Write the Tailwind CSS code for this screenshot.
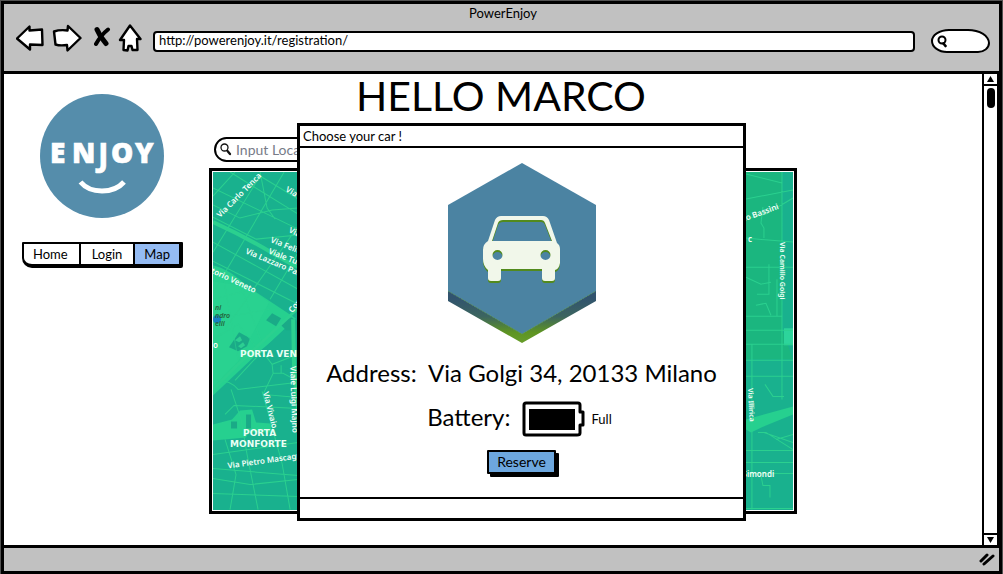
<!DOCTYPE html>
<html lang="en">
<head>
<meta charset="utf-8">
<meta name="viewport" content="width=device-width, initial-scale=1">
<title>PowerEnjoy</title>
<script src="https://cdn.jsdelivr.net/npm/@tailwindcss/browser@4"></script>
</head>
<body class="bg-white p-px font-['Lato',sans-serif] text-[13px] leading-4 text-black">
<div class="flex min-h-[calc(100vh-2px)] flex-col border-3 border-black bg-white outline outline-neutral-600">

  <!-- Browser bar -->
  <header class="border-b-3 border-black bg-[#c1c1c1] pt-px pr-[9px] pb-[18px] pl-3">
    <p class="text-center">PowerEnjoy</p>
    <div class="flex items-center pt-0.5">
      <button type="button" aria-label="Back" class="mr-2"><svg class="block" width="28" height="30" viewBox="16 22 28 30" fill="#fff" stroke="#000" stroke-width="2.4" stroke-linejoin="round"><path d="M17 37.500L29.500 25.500V29.500L42 28.500L42.500 44L30 43.500V48.500Z"/></svg></button>
      <button type="button" aria-label="Forward" class="mr-3"><svg class="block" width="30" height="30" viewBox="52 22 30 30" fill="#fff" stroke="#000" stroke-width="2.400" stroke-linejoin="round"><path d="M54 30.500Q60 28.500 67.500 29.500L68 25L80.500 37L67.500 49.500L67 44Q60 45 55.500 43.500Z"/></svg></button>
      <button type="button" aria-label="Stop" class="mr-1.5"><svg class="block" width="18" height="30" viewBox="94 22 18 30" fill="none" stroke="#000" stroke-linecap="round"><path stroke-width="5" d="M97 28.500Q100 36 106 42.500"/><path stroke-width="4" d="M108 28.500Q101 34 96 43"/></svg></button>
      <button type="button" aria-label="Home" class="mr-[11px]"><svg class="block" width="24" height="30" viewBox="118 22 24 30" fill="#fff" stroke="#000" stroke-width="2.400" stroke-linejoin="round"><path d="M130 24.500L140.500 38H137L137.500 49H132.500L131.500 45H128.500L127.500 49.500L123.500 49L124 39H120Z"/></svg></button>
      <input aria-label="Address" type="text" value="http://powerenjoy.it/registration/" class="mt-1.5 mr-4 h-[21px] min-w-0 flex-1 rounded-sm border-2 border-black bg-white px-1 pb-0.5 outline-none">
      <label class="mt-1.5 flex h-6 w-[59px] items-center rounded-[18px_22px_12px_16px/12px_14px_10px_12px] border-2 border-black bg-white pl-1">
        <svg class="shrink-0" width="11" height="13" viewBox="0 0 11 13" fill="none" stroke="#000" stroke-width="2" stroke-linecap="round"><circle cx="5" cy="5" r="3.500"/><path stroke-width="2.600" d="M6.500 8.500L8.500 11"/></svg>
        <input aria-label="Search" type="text" class="w-full min-w-0 bg-transparent outline-none">
      </label>
    </div>
  </header>

  <div class="flex flex-1">
    <!-- Logo and navigation -->
    <aside class="flex w-[205px] shrink-0 flex-col items-start pt-5 pl-[18px]">
      <svg class="ml-[18px]" width="124" height="124" viewBox="40 94 124 124" role="img" aria-label="Enjoy">
        <circle cx="102" cy="156" r="62" fill="#558dab"/>
        <g fill="#fff" stroke="#fff" stroke-width=".6" font-family="Open Sans, sans-serif" font-weight="800" font-size="28"><text x="50" y="163">E</text><text x="72" y="163">N</text><text x="98" y="166" font-size="32" font-weight="700">J</text><text x="111" y="163">O</text><text x="135" y="163">Y</text></g>
        <path d="M80.500 182Q88 191 102 191T124 182" fill="none" stroke="#fff" stroke-width="5"/>
      </svg>
      <nav class="mt-6 flex rounded-[1px_1px_2px_10px] border-2 border-b-4 border-black text-[13px]">
        <a href="#home" class="pr-[11px] pl-[9px] py-0.5">Home</a>
        <a href="#login" class="border-x-2 border-black px-[11px] py-0.5">Login</a>
        <a href="#map" aria-current="page" class="border-r-2 border-black bg-[#94bbf3] px-[9px] py-0.5">Map</a>
      </nav>
    </aside>

    <!-- Page content -->
    <main class="relative mr-[185px] mb-[31px] flex min-w-0 flex-1 flex-col">
      <h1 class="pt-0.5 pr-1 text-center text-[41px] leading-10">HELLO MARCO</h1>
      <label class="mt-[21px] ml-[5px] flex h-[25px] w-80 items-center gap-1 rounded-full border-2 border-black bg-white pl-1 text-sm text-[#777b88]">
        <svg class="shrink-0" width="12" height="13" viewBox="0 0 12 13" fill="none" stroke="#111" stroke-linecap="round"><circle cx="4.500" cy="4.500" r="3.500" stroke-width="1.300"/><path stroke-width="2.300" d="M7.500 8L10 11"/></svg>
        <input type="search" aria-label="Location" placeholder="Input Location" class="w-full min-w-0 bg-transparent outline-none placeholder:text-[#777b88]">
      </label>
      <div class="mt-1.5 flex flex-1 border-3 border-black p-px">
        <svg class="min-h-[337px] w-full flex-1" viewBox="213 173 579 337" preserveAspectRatio="xMidYMid slice" role="img" aria-label="Map of Milan">
          <path fill="#19b18e" d="M0 0H1000V700H0Z"/>
          <path fill="#1bb67f" d="M755 173H781V330L792 360H745V173Z"/>
          <g fill="#26d08f">
            <path d="M213 266Q230 270 247 287L300 322V320L262 350L213 396Z"/>
            <path fill="#2bd492" d="M213 282L247 287L269 303L238 362L213 388Z" opacity=".5"/>
            <path d="M213 425L232 420L240 411L252 410L256 423L271 424V433L248 433L246 438L213 441Z"/>
            <path fill="#2dd49b" d="M783 329H792V346H783Z"/>
            <path d="M745 420L792 407V415L765 426L750 433L745 430Z"/>
          </g>
          <path fill="#19b18e" d="M250 362L300 315V372L272 366L262 352Z"/>
          <g fill="#1aaa87"><path d="M229 348L239 333L250 339L247 347L238 352Z"/><path d="M266 321L272 314L281 319L276 327Z"/><path d="M280 325L291 318L298 323V331H286Z"/><path d="M231 422H237V429H231ZM246 415H251V429H246Z"/></g>
          <path fill="#2dcf92" d="M235 341L240 337L242 341L239 343ZM238 347L243 343L245 346L241 349Z"/>
          <g fill="none" stroke="#2bd08f" stroke-width="1">
            <path stroke-width="4" d="M213 223Q246 238 274 255T300 266"/>
            <path stroke-width="3" d="M213 390L236 367L300 307"/>
            <path stroke-width="4" d="M293 320L294 372L298 410"/>
            <path d="M260 173L267 209L275 220M260 177L213 253M260 177L298 200M213 189L298 230M235 173L213 197M298 209L272 211L240 219L213 206M284 173L213 294M298 227L225 330M300 250L270 300M213 243L298 290M213 262L298 305M230 173L298 215M213 218L256 240L298 236"/>
            <path opacity=".6" d="M213 300L252 290M213 320L270 310M222 270L238 360M240 285L262 345M213 340L238 325L258 350"/>
            <path d="M213 381Q230 380 238 390L298 383M235 381L262 352L272 365L298 355M272 365L273 374L263 395L298 398M273 374H283L298 382M281 366V374M231 390L241 420L247 455L258 510M262 392L271 424L282 464L290 510M225 415L234 406L298 409M213 455L298 443M213 469L298 476M213 479L250 485L298 480M213 494L298 497M225 440L236 475L230 510"/>
            <path d="M745 175L781 184M745 200L792 191M745 220L765 215L792 199M781 173V400M745 239L792 243M762 208L760 224L763 229V239M745 268H792M745 278L760 285L770 283M768 280V295H756M768 282V265M755 306L765 304L770 316M776 280V317M745 317H781M745 331H792M781 317V400M745 345H792M745 361H792M764 385L772 397H783M745 377H792M751 345V510M757 433H765L792 450M763 433L792 443M775 440L792 435M745 451H792M745 463H792M760 476L762 486H769V498M745 474L792 474M745 509H792"/>
          </g>
          <circle cx="217" cy="320" r="4" fill="#1683c5"/>
          <g fill="#f3fff9" font-family="Noto Sans, sans-serif" font-size="8" font-weight="600">
            <text transform="translate(220 219) rotate(-45)">Via Carlo Tenca</text>
            <text transform="translate(285 192) rotate(30)">Via Parini</text>
            <text transform="translate(288 233) rotate(25)">Via Marina</text>
            <text transform="translate(270 243) rotate(22)">Via Felice Casati</text>
            <text transform="translate(268 254) rotate(22)">Viale Tunisia</text>
            <text transform="translate(245 254) rotate(23)">Via Lazzaro Palazzi</text>
            <text transform="translate(201 269) rotate(25)">Vittorio Veneto</text>
            <text transform="translate(292 314) rotate(-50)">Corso</text>
            <text transform="translate(290 367) rotate(88)">Viale Luigi Majno</text>
            <text transform="translate(263 393) rotate(76)">Via Vivaio</text>
            <text transform="translate(228 469) rotate(-8)">Via Pietro Mascagni</text>
            <text transform="translate(728 228) rotate(-20)">Emilio Bassini</text>
            <text x="747" y="243">c</text>
            <text transform="translate(779 243) rotate(90)" font-size="7">Via Camillo Golgi</text>
            <text transform="translate(747 389) rotate(87)" font-size="7">Via Illirica</text>
            <text x="722" y="477" font-size="8">Aldo Simondi</text>
            <text x="213" y="349">o</text>
          </g>
          <g fill="#23653b" font-family="Noto Sans, sans-serif" font-size="7" font-weight="600" font-style="italic"><text x="215" y="311">ni</text><text x="215" y="319">ndro</text><text x="215" y="327">elli</text></g>
          <g fill="#e9fff5" font-family="DejaVu Sans, sans-serif" font-size="9" font-weight="700"><text x="240" y="358">PORTA VENEZIA</text><text x="243" y="437">PORTA</text><text x="230" y="448">MONFORTE</text></g>
        </svg>
      </div>

      <!-- Car dialog -->
      <section role="dialog" aria-labelledby="dialog-title" class="absolute top-[49px] right-[51px] -bottom-[7px] left-[88px] flex flex-col border-3 border-black bg-white">
        <h2 id="dialog-title" class="border-b-2 border-black px-[3px] py-0.5">Choose your car !</h2>
        <div class="flex flex-1 flex-col items-center pt-[13px]">
          <svg class="block" width="150" height="184" viewBox="447 161 150 184" role="img" aria-label="Car">
            <defs>
              <linearGradient id="edge" x1="0" y1="290" x2="0" y2="343" gradientUnits="userSpaceOnUse"><stop offset=".15" stop-color="#31536e"/><stop offset=".5" stop-color="#3c655f"/><stop offset=".8" stop-color="#5e9422"/><stop offset="1" stop-color="#679d29"/></linearGradient>
              <path id="car" fill-rule="evenodd" d="M501 216H543Q547 216 549 220L557 243Q560 245 560 249V263Q559 269 555 270V278Q555 281 552 281H545Q542 281 542 278V269H501V278Q501 281 498 281H491Q488 281 488 278V270Q483 266 483 259V250Q483 244 488 241L495 220Q497 216 501 216ZM503 220Q499 220 498 223L492 241H552L545 223Q544 220 541 220ZM497.500 250A5 5 0 1 0 497.500 260A5 5 0 1 0 497.500 250ZM545.500 250A5 5 0 1 0 545.500 260A5 5 0 1 0 545.500 250Z"/>
            </defs>
            <path fill="url(#edge)" d="M448 288L522 332L596 288V301L522 343L448 301Z"/>
            <path fill="#4b83a2" d="M522 163L596 205V291L522 334L448 291V205Z"/>
            <path fill="none" stroke="#65a15a" stroke-width=".7" stroke-dasharray="2 1" d="M448 291L522 334L596 291"/>
            <use href="#car" y="2" fill="#528a1d"/><use href="#car" fill="#f1f7ea"/>
          </svg>
          <p class="mt-3 text-2xl leading-8 whitespace-pre">Address:  Via Golgi 34, 20133 Milano</p>
          <div class="mt-3 flex items-center pr-1">
            <p class="mr-3 pb-1 text-2xl leading-8">Battery:</p>
            <svg class="mr-1.5" width="63" height="36" viewBox="522 402 63 36" role="img" aria-label="Battery full"><path fill="#fff" stroke="#000" stroke-width="3" stroke-linejoin="round" d="M526 404H578Q580 404 580 406V413H583V426H580V434Q580 436 577 436H526Q524 436 524 434V406Q524 404 526 404Z"/><path d="M529 410H575V431H529Z"/></svg>
            <span>Full</span>
          </div>
          <button type="button" class="mt-[13px] rounded-[1px] border-2 border-black bg-[#6da7de] px-2 py-0.5 text-sm leading-4 shadow-[3px_3px_0_#000]">Reserve</button>
        </div>
        <footer class="h-[21px] border-t-2 border-black"></footer>
      </section>
    </main>

    <!-- Scrollbar -->
    <div class="flex w-[17px] shrink-0 flex-col border-x-2 border-black">
      <button type="button" aria-label="Scroll up" class="border-b-2 border-black"><svg class="mx-auto block" width="11" height="10" viewBox="0 0 11 10"><path d="M5.500 2L9 8H2Z"/></svg></button>
      <div class="mt-0.5 h-5 w-2 self-center rounded-sm bg-black"></div>
      <button type="button" aria-label="Scroll down" class="mt-auto border-t-2 border-black"><svg class="mx-auto block" width="11" height="10" viewBox="0 0 11 10"><path d="M5.500 8L9 2H2Z"/></svg></button>
    </div>
  </div>

  <!-- Status bar -->
  <footer class="flex h-[26px] items-center justify-end border-t-3 border-black bg-[#c1c1c1] pr-1">
    <svg width="16" height="15" viewBox="0 0 16 15" stroke="#000" stroke-width="3" stroke-linecap="round"><path d="M2 9L8 3M5 12L14 4"/></svg>
  </footer>
</div>
</body>
</html>
